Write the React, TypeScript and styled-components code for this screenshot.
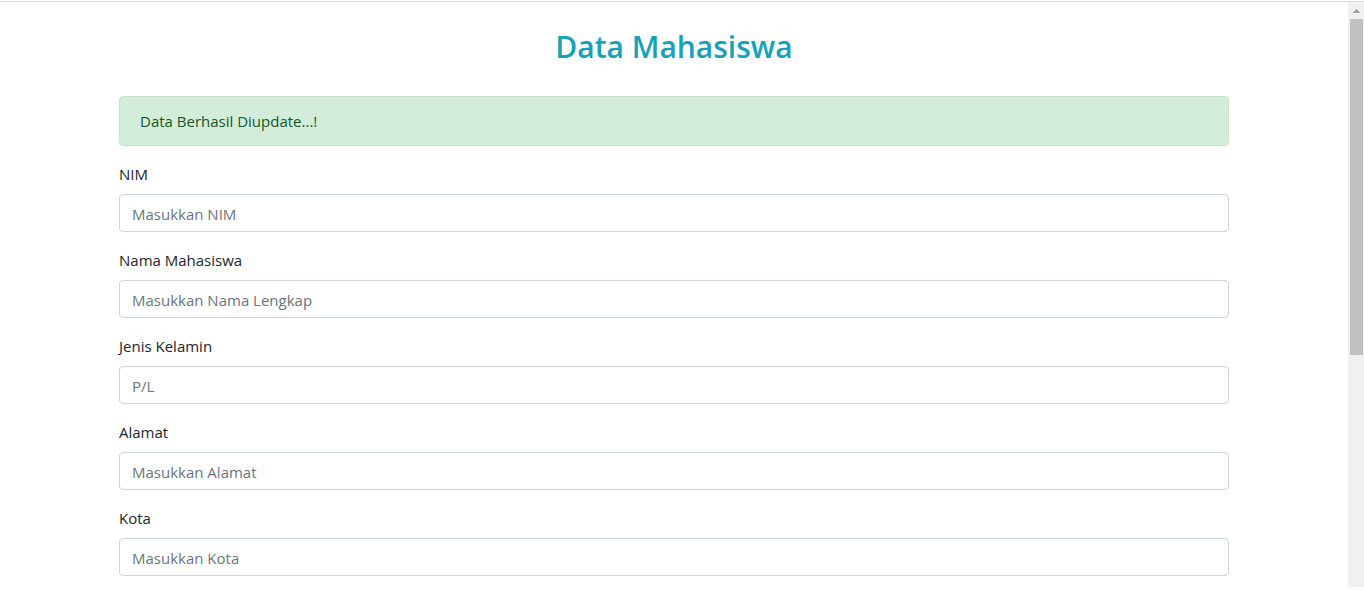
import React from "react";
import styled, { createGlobalStyle } from "styled-components";

const GlobalStyle = createGlobalStyle`
  *, *::before, *::after { box-sizing: border-box; }
  body {
    margin: 0;
    background: #fff;
    color: #212529;
    font-family: "Segoe UI", "Open Sans", "Noto Sans", sans-serif;
    font-size: 15px;
    line-height: 24px;
  }
`;

const Window = styled.div`
  display: flex;
  min-height: 100vh;
  padding: 1px 0 3px;
`;

const Page = styled.main`
  flex: 1;
  min-width: 0;
  border-top: 1px solid #dcdcdc;
`;

const Container = styled.div`
  max-width: 1140px;
  margin: 0 auto;
  padding: 25px 15px 0;
`;

const Title = styled.h2`
  margin: 0 0 30px;
  color: #17a2b8;
  font-size: 30px;
  font-weight: 600;
  line-height: 39px;
  text-align: center;
`;

const Alert = styled.div`
  margin-bottom: 16px;
  padding: 12px 20px;
  border: 1px solid #c3e6cb;
  border-radius: 4px;
  background: #d4edda;
  color: #155724;
`;

const FormGroup = styled.div`
  margin-bottom: 16px;

  &:last-child {
    margin-bottom: 0;
  }
`;

const Label = styled.label`
  display: block;
  margin-bottom: 8px;
`;

const Input = styled.input`
  display: block;
  width: 100%;
  height: 38px;
  padding: 8px 12px 6px;
  border: 1px solid #ced4da;
  border-radius: 4px;
  background: #fff;
  color: #495057;
  font: inherit;

  &::placeholder {
    color: #6c757d;
    opacity: 1;
  }

  &:focus {
    border-color: #80bdff;
    outline: none;
    box-shadow: 0 0 0 3px #bfdeff;
  }
`;

const Scrollbar = styled.div`
  display: flex;
  flex-direction: column;
  align-items: center;
  width: 16px;
  border-top: 1px solid #dcdcdc;
  background: #f0f0f0;
`;

const ScrollArrow = styled.svg`
  display: block;
  width: 16px;
  height: 17px;
  fill: #a3a3a3;
`;

const ScrollThumb = styled.div`
  width: 13px;
  height: 336px;
  margin-left: 1px;
  background: #c1c1c1;
`;

const fields = [
  { id: "nim", label: "NIM", placeholder: "Masukkan NIM" },
  { id: "nama", label: "Nama Mahasiswa", placeholder: "Masukkan Nama Lengkap" },
  { id: "jk", label: "Jenis Kelamin", placeholder: "P/L" },
  { id: "alamat", label: "Alamat", placeholder: "Masukkan Alamat" },
  { id: "kota", label: "Kota", placeholder: "Masukkan Kota" },
];

export default function App() {
  return (
    <>
      <GlobalStyle />
      <Window>
        <Page>
          <Container>
            <Title>Data Mahasiswa</Title>
            <Alert role="alert">Data Berhasil Diupdate...!</Alert>
            <form>
              {fields.map((field) => (
                <FormGroup key={field.id}>
                  <Label htmlFor={field.id}>{field.label}</Label>
                  <Input
                    type="text"
                    id={field.id}
                    name={field.id}
                    placeholder={field.placeholder}
                  />
                </FormGroup>
              ))}
            </form>
          </Container>
        </Page>
        <Scrollbar aria-hidden="true">
          <ScrollArrow viewBox="0 0 16 17" shapeRendering="crispEdges">
            <path d="M8 7h1v1h1v1h1v1h1v1H5v-1h1V9h1V8h1z" />
          </ScrollArrow>
          <ScrollThumb />
        </Scrollbar>
      </Window>
    </>
  );
}
